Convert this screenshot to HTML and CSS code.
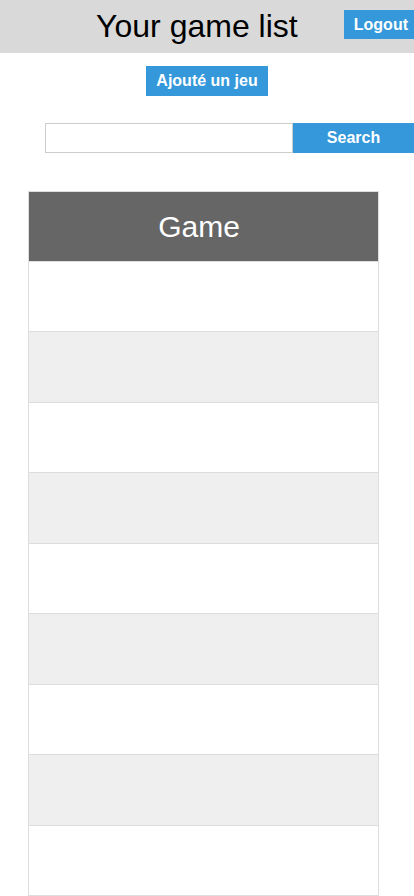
FILE: index.html
```html
<!DOCTYPE html>
<html lang="en">
<head>
    <meta charset="UTF-8">
    <meta name="viewport" content="width=device-width, initial-scale=1.0">
    <title>Your game list</title>
    <link rel="stylesheet" href="styles.css">
</head>
<body>
    <header class="topbar">
        <h1 class="title">Your game list</h1>
        <button class="btn btn-logout">Logout</button>
    </header>

    <div class="actions">
        <button class="btn btn-add">Ajouté un jeu</button>
    </div>

    <form class="search">
        <input type="text" class="search-input">
        <button type="submit" class="btn btn-search">Search</button>
    </form>

    <div class="list">
        <table class="games">
            <thead>
                <tr><th>Game</th></tr>
            </thead>
            <tbody>
                <tr><td></td></tr>
                <tr><td></td></tr>
                <tr><td></td></tr>
                <tr><td></td></tr>
                <tr><td></td></tr>
                <tr><td></td></tr>
                <tr><td></td></tr>
                <tr><td></td></tr>
                <tr><td></td></tr>
            </tbody>
        </table>
    </div>
</body>
</html>
```

FILE: styles.css
```css
body {
    margin: 0;
    font-family: "Liberation Sans", Arial, sans-serif;
    background-color: #fff;
}
.topbar {
    display: flex;
    align-items: flex-start;
    height: 53px;
    background-color: #d9d9d9;
}
.title {
    flex: 1;
    margin: 0;
    padding-left: 50px;
    text-align: center;
    font-size: 32px;
    font-weight: normal;
    line-height: 53px;
    color: #000;
}
.btn {
    border: none;
    background-color: #3498db;
    color: #fff;
    font-family: "Liberation Sans", Arial, sans-serif;
    font-weight: bold;
    font-size: 16px;
    cursor: pointer;
}
.btn-logout {
    margin-top: 10px;
    height: 29px;
    padding: 0 6px 0 10px;
}
.actions {
    display: flex;
    justify-content: center;
    padding-top: 13px;
}
.btn-add {
    height: 30px;
    padding: 0 10px;
}
.search {
    display: flex;
    margin: 27px 0 0 45px;
    height: 30px;
}
.search-input {
    box-sizing: border-box;
    width: 248px;
    height: 30px;
    margin: 0;
    border: 1px solid #ccc;
}
.btn-search {
    width: 121px;
    height: 30px;
}
.list {
    padding: 38px 0 0 28px;
}
.games {
    width: 351px;
    border-collapse: collapse;
}
.games th {
    height: 69px;
    padding: 0 9px 0 0;
    background-color: #666;
    color: #fff;
    font-size: 30px;
    font-weight: normal;
    border: 1px solid #ddd;
}
.games td {
    height: 69.45px;
    padding: 0;
    border: 1px solid #ddd;
}
.games tbody tr:nth-child(even) {
    background-color: #efefef;
}
```
